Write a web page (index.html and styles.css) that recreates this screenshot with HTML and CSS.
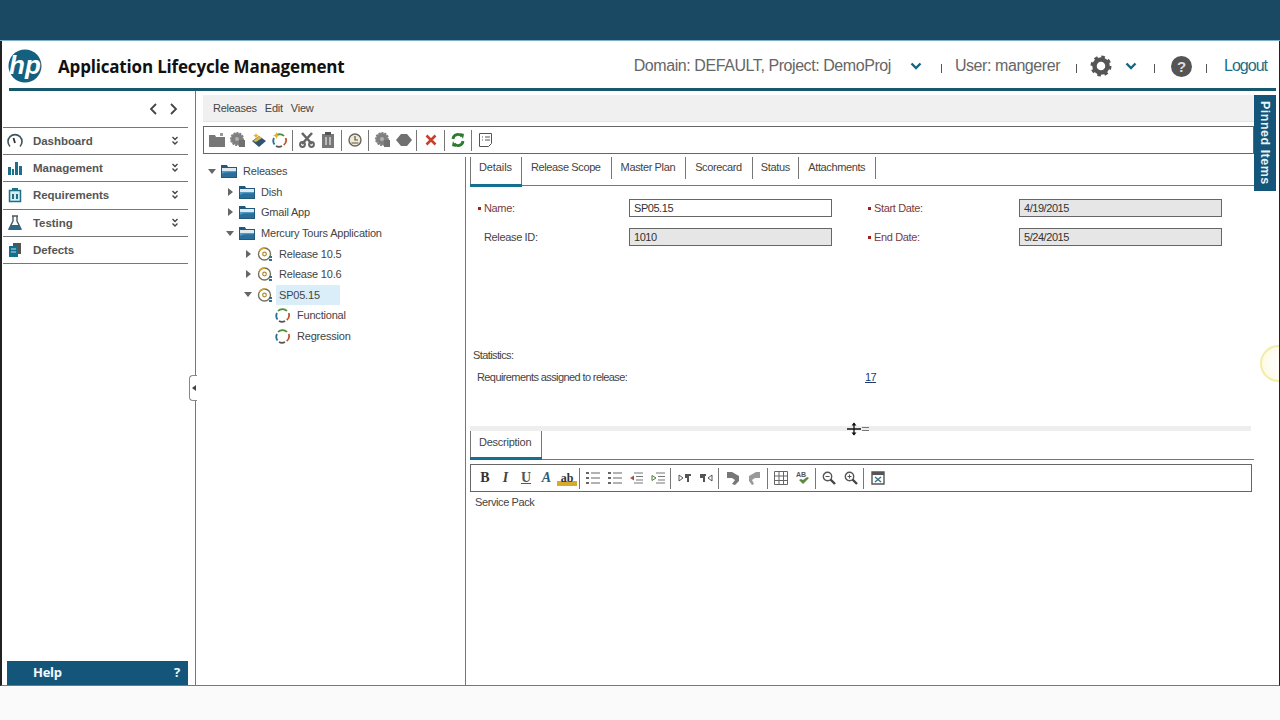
FILE: index.html
```html
<!DOCTYPE html>
<html lang="en">
<head>
<meta charset="utf-8">
<title>Application Lifecycle Management</title>
<link rel="stylesheet" href="styles.css">
</head>
<body>
<svg class="defs" width="0" height="0" aria-hidden="true">
  <defs>
    <symbol id="chev" viewBox="0 0 12 8"><path d="M1.500 1.500 6 6l4.500-4.500" fill="none" stroke="#17657f" stroke-width="2.400"/></symbol>
    <symbol id="dbl" viewBox="0 0 8 10"><path d="M1.500 1 4 3.500 6.500 1M1.500 5.500 4 8l2.500-2.500" fill="none" stroke="#444" stroke-width="1.400"/></symbol>
    <symbol id="folder" viewBox="0 0 16 14"><path d="M0 1h6l1 2h9v11H0z" fill="#24587a"/><path d="M1 4h14v3H1z" fill="#dfe8ee"/><path d="M1 7h14v6H1z" fill="#4e9cc6"/><path d="M1 10c5-3 9-1 14-2v5H1z" fill="#2a6f9c"/></symbol>
    <symbol id="rel" viewBox="0 0 16 16"><circle cx="7.500" cy="8" r="6" fill="#fff" stroke="#77705a" stroke-width="1.400"/><path d="M2.500 5A6 6 0 0 1 8 2" fill="none" stroke="#d9a520" stroke-width="1.400"/><circle cx="7.500" cy="8" r="1.800" fill="#fff" stroke="#b08a30" stroke-width="1.200"/><path d="M12 10h3v2h-3zM12 13h3v2h-3z" fill="#2e7196"/></symbol>
    <symbol id="cycle" viewBox="0 0 16 16"><path d="M3 4a6.200 6.200 0 0 1 9 0" fill="none" stroke="#4a8f3a" stroke-width="1.800"/><path d="M13.700 6a6.200 6.200 0 0 1-2 7" fill="none" stroke="#c2562a" stroke-width="1.800"/><path d="M10 14a6.200 6.200 0 0 1-6 0" fill="none" stroke="#555" stroke-width="1.800"/><path d="M2.500 12.500A6.200 6.200 0 0 1 2 6" fill="none" stroke="#2b6f93" stroke-width="1.800"/></symbol>
    <symbol id="gcog" viewBox="0 0 16 16"><circle cx="7" cy="7" r="6" fill="#808080" stroke="#808080" stroke-width="2" stroke-dasharray="2 1"/><circle cx="7" cy="7" r="2" fill="#b0b0b0"/><rect x="9" y="8" width="6" height="7" fill="#707070"/></symbol>
    <symbol id="tbl" viewBox="0 0 14 14"><path d="M.5.5h13v13H.5zM.5 5h13M.5 9.500h13M5 .5v13M9.500.5v13" fill="none" stroke="#666"/></symbol>
    <symbol id="lines" viewBox="0 0 14 14"><path d="M5 2h9M5 7h9M5 12h9" stroke="#666" stroke-width="1.200"/><path d="M0 1h3v2H0zM0 6h3v2H0zM0 11h3v2H0z" fill="#666"/></symbol>
    <symbol id="indent" viewBox="0 0 14 12"><path d="M5 1h9M7 4.500h7M7 8h7M5 11h9" stroke="#777" stroke-width="1.200"/><path d="M5 3.500v5L1 6z" fill="#a3533c"/></symbol>
    <symbol id="outdent" viewBox="0 0 14 12"><path d="M5 1h9M7 4.500h7M7 8h7M5 11h9" stroke="#777" stroke-width="1.200"/><path d="M1 3.500v5L5 6z" fill="none" stroke="#4a7a3a"/></symbol>
  </defs>
</svg>

<div class="topbar"></div>
<div class="app">
  <header class="head">
    <svg class="logo" viewBox="0 0 34 34" width="34" height="34"><circle cx="17" cy="17" r="16.500" fill="#14607f"/><text class="logo-text" x="17" y="25" text-anchor="middle">hp</text></svg>
    <h1 class="title">Application Lifecycle Management</h1>
    <div class="userbar">
      <span class="ub-text">Domain: DEFAULT, Project: DemoProj</span>
      <svg class="ub-chev ub-c1" width="12" height="8"><use href="#chev"/></svg>
      <span class="ub-sep s1"></span>
      <span class="ub-text">User: mangerer</span>
      <span class="ub-sep s2"></span>
      <svg class="ub-gear" viewBox="0 0 22 22" width="22" height="22"><circle cx="11" cy="11" r="6.500" fill="none" stroke="#555" stroke-width="4.500"/><circle cx="11" cy="11" r="9" fill="none" stroke="#555" stroke-width="3" stroke-dasharray="3.500 3.570"/></svg>
      <svg class="ub-chev ub-c2" width="12" height="8"><use href="#chev"/></svg>
      <span class="ub-sep s3"></span>
      <span class="ub-help">?</span>
      <span class="ub-sep s4"></span>
      <a class="ub-logout">Logout</a>
    </div>
  </header>
  <div class="rule"></div>

  <div class="main">
    <aside class="side">
      <div class="side-arrows">
        <svg width="9" height="12" viewBox="0 0 9 12"><path d="M7 1 2 6l5 5" fill="none" stroke="#444" stroke-width="1.800"/></svg>
        <svg width="9" height="12" viewBox="0 0 9 12"><path d="M2 1l5 5-5 5" fill="none" stroke="#444" stroke-width="1.800"/></svg>
      </div>
      <nav class="nav">
        <div class="nav-item">
          <svg class="nav-icon" viewBox="0 0 16 16" width="16" height="16"><path d="M3 13.500A7 7 0 1 1 13 13.500" fill="none" stroke="#3d5560" stroke-width="1.600"/><path d="M6.500 5l1.500 5" stroke="#333" stroke-width="1.800"/></svg>
          <span class="nav-label">Dashboard</span><svg class="nav-dbl" width="8" height="10"><use href="#dbl"/></svg>
        </div>
        <div class="nav-item">
          <svg class="nav-icon" viewBox="0 0 16 16" width="16" height="16"><path d="M1 7h3v8H1zM5 9h2v6H5zM8 2h3v13H8zM12 6h3v9h-3z" fill="#1d708c"/></svg>
          <span class="nav-label">Management</span><svg class="nav-dbl" width="8" height="10"><use href="#dbl"/></svg>
        </div>
        <div class="nav-item">
          <svg class="nav-icon" viewBox="0 0 16 16" width="16" height="16"><path d="M2.500 3.500h11v11h-11z" fill="#d4ecf2" stroke="#1f6f88" stroke-width="1.500"/><path d="M5 1h6v3H5zM5 7h2v5H5zM9 7h2v5H9z" fill="#1f6f88"/></svg>
          <span class="nav-label">Requirements</span><svg class="nav-dbl" width="8" height="10"><use href="#dbl"/></svg>
        </div>
        <div class="nav-item">
          <svg class="nav-icon" viewBox="0 0 16 16" width="16" height="16"><path d="M6 1v5L2 14h12l-4-8V1M5 1h6" fill="none" stroke="#4b5a62" stroke-width="1.400"/><path d="M4 10h8l2 5H2z" fill="#2a6a85"/></svg>
          <span class="nav-label">Testing</span><svg class="nav-dbl" width="8" height="10"><use href="#dbl"/></svg>
        </div>
        <div class="nav-item">
          <svg class="nav-icon" viewBox="0 0 16 16" width="16" height="16"><path d="M6 1h8v11H6z" fill="#555"/><path d="M2 4h9v11H2z" fill="#14708f"/><path d="M4 7h5M4 10h5" stroke="#bcdde8"/></svg>
          <span class="nav-label">Defects</span>
        </div>
      </nav>
      <div class="help"><span>Help</span><span>?</span></div>
      <div class="handle"><svg width="4" height="6" viewBox="0 0 4 6"><path d="M4 0v6L0 3z" fill="#444"/></svg></div>
    </aside>

    <section class="work">
      <div class="menubar"><span>Releases</span><span>Edit</span><span>View</span></div>
      <div class="toolbar">
        <span class="tb"><svg width="16" height="14" viewBox="0 0 16 14"><path d="M0 2h6l1 2h9v10H0z" fill="#777"/><path d="M11 0h3v3h-3z" fill="#999"/></svg></span>
        <span class="tb"><svg width="16" height="16"><use href="#gcog"/></svg></span>
        <span class="tb"><svg width="16" height="16" viewBox="0 0 16 16"><path d="M8 4l7 5-7 6-7-6z" fill="#2f5573"/><path d="M8 4l3 2-6 4-3-1z" fill="#d8b64a"/><path d="M5 1l1 2 2 .5-2 1L5 6 4 4.500l-2-1 2-.5z" fill="#e6b422"/></svg></span>
        <span class="tb"><svg width="16" height="16" viewBox="0 0 16 16"><use href="#cycle"/><path d="M4.500 0l1 2.500 2.500 1-2.500 1-1 2.500-1-2.500-2.500-1 2.500-1z" fill="#e6b422"/></svg></span>
        <i class="sep"></i>
        <span class="tb"><svg width="16" height="16" viewBox="0 0 16 16"><path d="M3 1l10 11M13 1 3 12" stroke="#666" stroke-width="2.600"/><circle cx="3.500" cy="12.500" r="2.400" fill="none" stroke="#666" stroke-width="2"/><circle cx="12.500" cy="12.500" r="2.400" fill="none" stroke="#666" stroke-width="2"/></svg></span>
        <span class="tb"><svg width="14" height="16" viewBox="0 0 14 16"><path d="M1 2h12v14H1z" fill="#777"/><path d="M4 0h6v3H4z" fill="#555"/><path d="M4 5h2v8H4zM8 5h2v8H8z" fill="#bbb"/></svg></span>
        <i class="sep"></i>
        <span class="tb"><svg width="14" height="14" viewBox="0 0 14 14"><circle cx="7" cy="7" r="6" fill="#f3ead0" stroke="#666" stroke-width="1.400"/><path d="M7 3v4h3M3.500 10h7" fill="none" stroke="#555" stroke-width="1.200"/></svg></span>
        <i class="sep"></i>
        <span class="tb"><svg width="16" height="16"><use href="#gcog"/></svg></span>
        <span class="tb"><svg width="16" height="12" viewBox="0 0 16 12"><path d="M5 0h6l5 6-5 6H5L0 6z" fill="#707070"/></svg></span>
        <i class="sep"></i>
        <span class="tb"><svg width="12" height="12" viewBox="0 0 12 12"><path d="M1.500 1.500l9 9M10.500 1.500l-9 9" stroke="#c8402a" stroke-width="2.600"/></svg></span>
        <i class="sep"></i>
        <span class="tb"><svg width="14" height="14" viewBox="0 0 14 14"><path d="M2 6a5 5 0 0 1 9-2.500M12 8a5 5 0 0 1-9 2.500" fill="none" stroke="#2f7a32" stroke-width="2.800"/><path d="M9 0l4 1-1 5zM5 14l-4-1 1-5z" fill="#2f7a32"/></svg></span>
        <i class="sep"></i>
        <span class="tb"><svg width="14" height="14" viewBox="0 0 14 14"><path d="M.5.5h12v10l-3 3H.5z" fill="#fff" stroke="#555"/><path d="M3 4h1M6 4h5M3 7h1M6 7h5" stroke="#555"/></svg></span>
      </div>

      <div class="split">
        <div class="tree">
          <div class="row l0"><i class="arr open"></i><svg class="ico" width="16" height="14"><use href="#folder"/></svg><span class="lbl">Releases</span></div>
          <div class="row l1"><i class="arr"></i><svg class="ico" width="16" height="14"><use href="#folder"/></svg><span class="lbl">Dish</span></div>
          <div class="row l1"><i class="arr"></i><svg class="ico" width="16" height="14"><use href="#folder"/></svg><span class="lbl">Gmail App</span></div>
          <div class="row l1"><i class="arr open"></i><svg class="ico" width="16" height="14"><use href="#folder"/></svg><span class="lbl">Mercury Tours Application</span></div>
          <div class="row l2"><i class="arr"></i><svg class="ico" width="16" height="16"><use href="#rel"/></svg><span class="lbl">Release 10.5</span></div>
          <div class="row l2"><i class="arr"></i><svg class="ico" width="16" height="16"><use href="#rel"/></svg><span class="lbl">Release 10.6</span></div>
          <div class="row l2"><i class="arr open"></i><svg class="ico" width="16" height="16"><use href="#rel"/></svg><span class="lbl selected">SP05.15</span></div>
          <div class="row l3"><i class="arr none"></i><svg class="ico" width="16" height="16"><use href="#cycle"/></svg><span class="lbl">Functional</span></div>
          <div class="row l3"><i class="arr none"></i><svg class="ico" width="16" height="16"><use href="#cycle"/></svg><span class="lbl">Regression</span></div>
        </div>

        <div class="detail">
          <div class="upper">
            <div class="tabs">
              <span class="tab active">Details</span>
              <span class="tab">Release Scope</span>
              <span class="tab">Master Plan</span>
              <span class="tab">Scorecard</span>
              <span class="tab tab-narrow">Status</span>
              <span class="tab">Attachments</span>
            </div>
            <div class="form">
              <label class="req">Name:</label><div class="input">SP05.15</div><span></span>
              <label class="req">Start Date:</label><div class="input ro">4/19/2015</div>
              <label class="plain">Release ID:</label><div class="input ro">1010</div><span></span>
              <label class="req">End Date:</label><div class="input ro">5/24/2015</div>
            </div>
            <div class="stats">
              <div class="stats-title">Statistics:</div>
              <div class="stats-row"><span>Requirements assigned to release:</span><a class="stats-link">17</a></div>
            </div>
          </div>
          <div class="splitter">
            <svg class="cursor" width="22" height="14" viewBox="0 0 22 14"><path d="M0 7h14M7 1v12" stroke="#111" stroke-width="1.300"/><path d="M4.500 3.500 7 .5l2.500 3zM4.500 10.500 7 13.500l2.500-3z" fill="#111"/><path d="M15 5.500h7M15 8.500h7" stroke="#777"/></svg>
          </div>
          <div class="lower">
            <div class="tabs tabs-lower"><span class="tab active">Description</span></div>
            <div class="rte">
              <span class="rb fmt b">B</span>
              <span class="rb fmt it">I</span>
              <span class="rb fmt un">U</span>
              <span class="rb fmt ca">A</span>
              <span class="rb fmt ab">ab</span>
              <i class="rsep"></i>
              <span class="rb"><svg width="14" height="14"><use href="#lines"/></svg></span>
              <span class="rb"><svg width="14" height="14"><use href="#lines"/></svg></span>
              <span class="rb"><svg width="14" height="12"><use href="#indent"/></svg></span>
              <span class="rb"><svg width="14" height="12"><use href="#outdent"/></svg></span>
              <i class="rsep"></i>
              <span class="rb"><svg width="14" height="10" viewBox="0 0 14 10"><path d="M1 2v6l4-3z" fill="none" stroke="#555"/><path d="M7 1h6v2h-2v6H9V5H7z" fill="#555"/></svg></span>
              <span class="rb"><svg width="14" height="10" viewBox="0 0 14 10"><path d="M13 2v6L9 5z" fill="none" stroke="#555"/><path d="M1 1h6v2H6v6H4V5H1z" fill="#555"/></svg></span>
              <i class="rsep"></i>
              <span class="rb"><svg width="14" height="14" viewBox="0 0 14 14"><path d="M1 1h5l7 4v5l-4 4-3-1 3-4-3-2H1z" fill="#777"/></svg></span>
              <span class="rb"><svg width="14" height="14" viewBox="0 0 14 14"><path d="M13 1H9L2 5v5l3 4 2-1-2-4 3-2h5z" fill="#999"/></svg></span>
              <i class="rsep"></i>
              <span class="rb"><svg width="14" height="14"><use href="#tbl"/></svg></span>
              <span class="rb"><svg width="14" height="14" viewBox="0 0 14 14"><path d="M3 9l4 4 6-6-2-1-4 3-2-1z" fill="#5b8a3c"/><text class="ab-text" x="0" y="6">AB</text></svg></span>
              <i class="rsep"></i>
              <span class="rb"><svg width="14" height="14" viewBox="0 0 14 14"><circle cx="5.500" cy="5.500" r="4.200" fill="#fff" stroke="#555" stroke-width="1.400"/><path d="M8.500 8.500l4.500 4.500" stroke="#444" stroke-width="2.400"/><path d="M3.500 5.500h4" stroke="#555"/></svg></span>
              <span class="rb"><svg width="14" height="14" viewBox="0 0 14 14"><circle cx="5.500" cy="5.500" r="4.200" fill="#fff" stroke="#555" stroke-width="1.400"/><path d="M8.500 8.500l4.500 4.500" stroke="#444" stroke-width="2.400"/><path d="M3.500 5.500h4M5.500 3.500v4" stroke="#555"/></svg></span>
              <i class="rsep"></i>
              <span class="rb"><svg width="14" height="14" viewBox="0 0 14 14"><path d="M1 1h12v12H1z" fill="#fff" stroke="#555" stroke-width="1.400"/><path d="M1 1h12v3H1z" fill="#555"/><path d="M4 6l6 5M10 6l-6 5" stroke="#2f6f8a" stroke-width="1.300"/></svg></span>
            </div>
            <div class="rte-body">Service Pack</div>
          </div>
        </div>
      </div>
    </section>

    <div class="pinned"><span>Pinned Items</span></div>
  </div>
  <div class="glow"></div>
</div>
</body>
</html>
```
FILE: styles.css
```css
* { box-sizing: border-box; }
html, body { margin: 0; padding: 0; }
body {
  width: 1280px;
  height: 720px;
  overflow: hidden;
  background: #fafafa;
  font-family: "Liberation Sans", Arial, sans-serif;
  font-size: 11px;
  color: #444;
  display: flex;
  flex-direction: column;
}
.defs { position: absolute; }
.topbar { height: 41px; flex: none; background: #1a4a63; border-bottom: 1px solid #7fb1c6; }
.app {
  position: relative;
  height: 645px;
  flex: none;
  background: #fff;
  border-left: 2px solid #222;
  border-right: 1px solid #222;
  border-bottom: 1px solid #777;
  display: flex;
  flex-direction: column;
  overflow: hidden;
}

/* header */
.head { height: 47px; flex: none; display: flex; align-items: center; padding: 3px 0 0 6px; }
.logo { flex: none; }
.logo-text { font: italic 700 26px "Liberation Sans", Arial, sans-serif; fill: #fff; }
.title { margin: 0 0 0 16px; font: 700 17px "Open Sans", Arial, sans-serif; color: #111; letter-spacing: -.18px; white-space: nowrap; }
.userbar { margin-left: auto; display: flex; align-items: center; padding-right: 12px; }
.ub-text { font-size: 16px; color: #666; letter-spacing: -.43px; white-space: nowrap; }
.ub-chev { flex: none; }
.ub-c1 { margin-left: 19px; }
.ub-c2 { margin-left: 13px; }
.ub-sep { width: 1px; height: 9px; background: #555; flex: none; }
.s1 { margin: 4px 13px 0 19px; }
.s2 { margin: 4px 13px 0 16px; }
.s3 { margin: 4px 16px 0 17px; }
.s4 { margin: 4px 17px 0 14px; }
.ub-gear { flex: none; }
.ub-help {
  width: 21px; height: 21px; border-radius: 50%; background: #555; color: #ddd;
  font-size: 15px; font-weight: 700; text-align: center; line-height: 21px; flex: none;
}
.ub-logout { font-size: 16px; color: #1c6e89; letter-spacing: -1px; }
.rule { height: 3px; flex: none; margin: 0 3px 0 7px; background: #17586f; }

/* body */
.main { flex: 1; min-height: 0; display: flex; }
.side {
  position: relative;
  width: 194px; flex: none;
  border-right: 1px solid #777;
  display: flex; flex-direction: column;
  padding: 0 7px 0 1px;
}
.side-arrows { height: 36px; flex: none; display: flex; justify-content: flex-end; align-items: center; gap: 11px; padding: 0 10px 0 0; }
.nav { border-top: 1px solid #777; flex: 1; }
.nav-item {
  height: 27.2px; display: flex; align-items: center;
  border-bottom: 1px solid #777;
  padding-left: 4px;
}
.nav-icon { flex: none; }
.nav-label { margin-left: 10px; flex: 1; font-size: 11.5px; font-weight: 700; color: #555; letter-spacing: -.05px; }
.nav-dbl { flex: none; margin-right: 9px; }
.help {
  height: 24px; flex: none; margin-left: 4px; padding: 0 8px 2px 26px;
  background: #14567a; color: #f4f8fa;
  display: flex; justify-content: space-between; align-items: center;
  font: 700 13px "Open Sans", Arial, sans-serif; letter-spacing: -.3px;
}
.handle {
  position: absolute; right: -2px; top: 284px;
  width: 8px; height: 26px;
  background: #fff; border: 1px solid #888; border-right: 0;
  border-radius: 4px 0 0 4px;
  display: flex; align-items: center; justify-content: center;
}

.work { flex: 1; min-width: 0; display: flex; flex-direction: column; padding-top: 4px; }
.menubar {
  height: 27px; flex: none; margin-left: 7px;
  background: #f0f0f0; border-bottom: 1px solid #e4e4e4;
  display: flex; align-items: center; gap: 8px; padding-left: 10px;
  color: #444; letter-spacing: -.25px;
}
.toolbar {
  height: 28px; flex: none; margin: 4px 0 0 7px;
  border: 1px solid #666;
  display: flex; align-items: center; padding-left: 2px;
}
.tb { width: 21px; flex: none; display: flex; justify-content: center; align-items: center; }
.sep { width: 1px; height: 21px; background: #777; margin: 0 3.200px 0 2.200px; flex: none; }

.split { flex: 1; min-height: 0; display: flex; margin-top: 3px; }
.tree { width: 270px; flex: none; border-right: 1px solid #777; padding-top: 4px; }
.row { height: 20.6px; display: flex; align-items: center; color: #444; white-space: nowrap; letter-spacing: -.2px; }
.l0 { padding-left: 10px; }
.l1 { padding-left: 28px; }
.l2 { padding-left: 46px; }
.l3 { padding-left: 64px; }
.arr { width: 12px; flex: none; display: flex; justify-content: center; }
.arr::before { content: ""; border-left: 5px solid #666; border-top: 4px solid transparent; border-bottom: 4px solid transparent; }
.arr.open::before { border-left: 4px solid transparent; border-right: 4px solid transparent; border-top: 5px solid #666; border-bottom: 0; }
.arr.none::before { display: none; }
.ico { flex: none; margin-left: 3px; }
.lbl { margin-left: 3px; padding: 0 3px; height: 20px; line-height: 20px; }
.lbl.selected { background: #d9eef8; padding-right: 23px; width: 64px; }

.detail { flex: 1; min-width: 0; display: flex; flex-direction: column; padding-left: 4px; }
.upper { height: 269px; flex: none; display: flex; flex-direction: column; }
.tabs { display: flex; height: 29px; flex: none; border-bottom: 1px solid #777; align-items: flex-start; }
.tab {
  height: 22px; line-height: 20px; padding: 0 10px 0 9px;
  border-right: 1px solid #777; color: #444; position: relative; letter-spacing: -.38px;
}
.tab-narrow { padding: 0 8.500px 0 8px; }
.tab.active { border-left: 1px solid #777; padding: 0 9px 0 8px; height: 28px; letter-spacing: -.1px; }
.tab.active::after { content: ""; position: absolute; left: -1px; right: -1px; bottom: -2px; height: 3px; background: #14708f; }
.form {
  display: grid;
  grid-template-columns: 151px 203px 36px 151px 203px;
  grid-auto-rows: 18px;
  row-gap: 11px;
  padding: 13px 0 0 8px;
  align-items: center;
}
.req { color: #7a3b3b; padding-left: 6px; position: relative; letter-spacing: -.35px; }
.req::before { content: ""; position: absolute; left: 0; top: 5px; width: 3px; height: 3px; background: #a02020; }
.plain { padding-left: 6px; color: #444; letter-spacing: -.35px; }
.input {
  height: 18px; line-height: 16px; padding-left: 4px;
  border: 1px solid #666; background: #fff; color: #333; font-size: 11px; letter-spacing: -.45px;
}
.input.ro { background: #e6e6e6; }
.stats { margin-top: 101px; }
.stats-title { height: 16px; line-height: 16px; padding-left: 3px; color: #444; letter-spacing: -.6px; }
.stats-row { margin-top: 6px; display: grid; grid-template-columns: 388px auto; padding-left: 7px; line-height: 16px; color: #444; letter-spacing: -.6px; }
.stats-link { color: #1c3c6e; text-decoration: underline; }

.splitter { position: relative; height: 5px; flex: none; background: #eeeeee; margin-right: 3px; }
.cursor { position: absolute; left: 377px; top: -4px; }
.lower { flex: 1; min-height: 0; }
.tabs-lower { height: 29px; }
.tabs-lower .tab.active { height: 27px; padding: 1px 10px 0 8px; letter-spacing: -.25px; }
.rte {
  height: 28px; margin: 4px 2px 0 0;
  border: 1px solid #666;
  display: flex; align-items: center; padding-left: 3.750px;
}
.rb { width: 21.5px; flex: none; display: flex; justify-content: center; align-items: center; }
.rb.fmt { width: 20.5px; }
.rsep { width: 1px; height: 21px; background: #777; margin: 0 2.800px 0 1.500px; flex: none; }
.b { font: 700 14px "Liberation Serif", serif; color: #333; }
.it { font: italic 700 14px "Liberation Serif", serif; color: #444; }
.un { font: 700 14px "Liberation Serif", serif; color: #555; text-decoration: underline; }
.ca { font: italic 700 14px "Liberation Serif", serif; color: #2a5f7c; }
.ab { font: 700 12px "Liberation Serif", serif; color: #333; background: linear-gradient(#fff 70%, #d9a92a 70%); }
.ab-text { font: 700 7px "Liberation Sans", Arial, sans-serif; fill: #555; }
.rte-body { padding: 2px 0 0 5px; line-height: 16px; color: #444; letter-spacing: -.4px; }

.pinned {
  width: 22px; flex: none; height: 96px; margin: 4px 3px 0 0;
  background: #14567a; color: #eaf2f6;
  display: flex; align-items: center; justify-content: center;
  writing-mode: vertical-rl;
  font-size: 12.500px; font-weight: 700; letter-spacing: .5px;
}
.glow {
  position: absolute; right: -18px; top: 304px;
  width: 37px; height: 37px; border-radius: 50%;
  background: radial-gradient(circle at 60% 50%, #fffef6 40%, #fbf7d8 100%);
  border: 2px solid #f3ebaa;
}
```
